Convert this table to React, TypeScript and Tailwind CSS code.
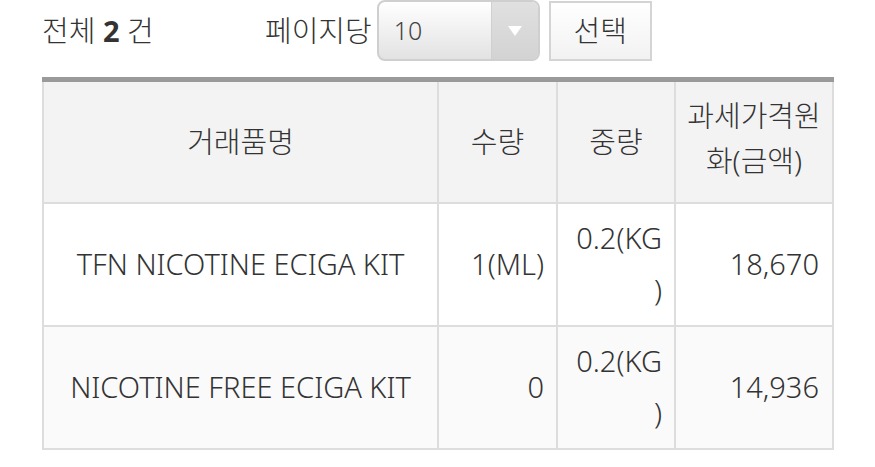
const rows = [
  { name: 'TFN NICOTINE ECIGA KIT', qty: '1(ML)', weight: ['0.2(KG', ')'], price: '18,670', bg: 'bg-white' },
  { name: 'NICOTINE FREE ECIGA KIT', qty: '0', weight: ['0.2(KG', ')'], price: '14,936', bg: 'bg-[#fafafa]' },
]

export default function App() {
  return (
    <div
      className="w-[875px] h-[467px] bg-white text-[#333] overflow-hidden pl-[42px] font-light"
      style={{ fontFamily: '"Noto Sans", "Noto Sans CJK KR", sans-serif' }}
    >
      {/* top bar */}
      <div className="flex items-center h-[61px] text-[29px]">
        <div className="w-[223px] leading-none">
          전체 <b className="font-bold">2</b> 건
        </div>
        <span className="leading-none">페이지당</span>
        <div className="ml-[5px] flex w-[163px] h-[61px] rounded-[8px] border-2 border-[#cfcfcf] bg-gradient-to-b from-white to-[#e2e2e2] overflow-hidden">
          <div className="flex-1 flex items-center pl-[15px] text-[25px] text-[#444]">10</div>
          <div className="w-[47px] flex items-center justify-center bg-gradient-to-b from-[#e0e0e0] to-[#d3d3d3] border-l border-[#d0d0d0]">
            <svg width="16" height="12" viewBox="0 0 16 12">
              <path d="M1 1 L15 1 L8 11 Z" fill="#fff" />
            </svg>
          </div>
        </div>
        <button className="ml-[9px] w-[103px] h-[60px] border-2 border-[#d4d4d4] bg-gradient-to-b from-white to-[#f2f2f2] text-[29px] text-[#333] leading-none font-light">
          선택
        </button>
      </div>

      {/* table */}
      <table className="mt-[16px] w-[790px] border-collapse table-fixed text-[29px] border-t-[5px] border-t-[#9a9a9a]">
        <colgroup>
          <col className="w-[395px]" />
          <col className="w-[119px]" />
          <col className="w-[118px]" />
          <col className="w-[158px]" />
        </colgroup>
        <thead>
          <tr className="h-[123px] bg-[#f3f3f3]">
            <th className="border-2 border-t-0 border-[#dddddd] font-light text-center">거래품명</th>
            <th className="border-2 border-t-0 border-[#dddddd] font-light text-center">수량</th>
            <th className="border-2 border-t-0 border-[#dddddd] font-light text-center">중량</th>
            <th className="border-2 border-t-0 border-[#dddddd] font-light text-center leading-[45px] px-[2px] pb-[8px]">
              과세가격원
              <br />
              화(금액)
            </th>
          </tr>
        </thead>
        <tbody>
          {rows.map((r) => (
            <tr key={r.name} className={`h-[123px] ${r.bg}`}>
              <td className="border-2 border-[#dddddd] text-center">{r.name}</td>
              <td className="border-2 border-[#dddddd] text-right pr-[12px]">{r.qty}</td>
              <td className="border-2 border-[#dddddd] text-right pr-[12px] leading-[52px]">
                {r.weight[0]}
                <br />
                {r.weight[1]}
              </td>
              <td className="border-2 border-[#dddddd] text-right pr-[13px]">{r.price}</td>
            </tr>
          ))}
        </tbody>
      </table>
    </div>
  )
}
